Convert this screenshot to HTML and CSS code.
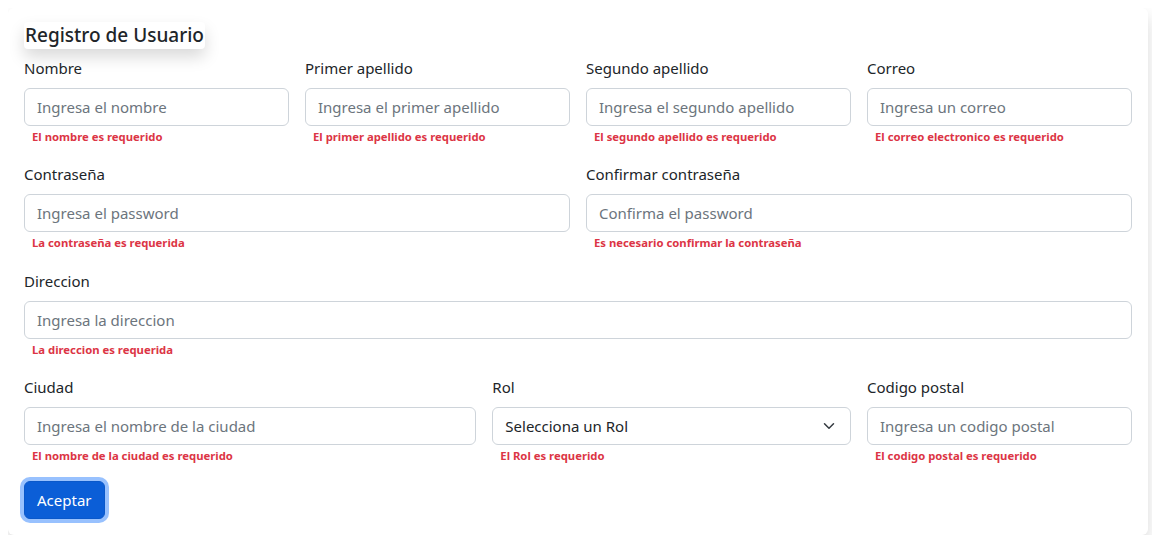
FILE: index.html
```html
<!DOCTYPE html>
<html lang="es">
  <head>
    <meta charset="UTF-8" />
    <meta name="viewport" content="width=device-width, initial-scale=1.0" />
    <title>Registro de Usuario</title>
    <link rel="stylesheet" href="styles.css">
  </head>
  <body>
    <form class="register-card">
      <h2 class="register-title">Registro de Usuario</h2>

      <div class="form-row">
        <div class="field col-3">
          <label>Nombre</label>
          <input type="text" placeholder="Ingresa el nombre" />
          <div class="error">El nombre es requerido</div>
        </div>
        <div class="field col-3">
          <label>Primer apellido</label>
          <input type="text" placeholder="Ingresa el primer apellido" />
          <div class="error">El primer apellido es requerido</div>
        </div>
        <div class="field col-3">
          <label>Segundo apellido</label>
          <input type="text" placeholder="Ingresa el segundo apellido" />
          <div class="error">El segundo apellido es requerido</div>
        </div>
        <div class="field col-3">
          <label>Correo</label>
          <input type="email" placeholder="Ingresa un correo" />
          <div class="error">El correo electronico es requerido</div>
        </div>
      </div>

      <div class="form-row">
        <div class="field col-6">
          <label>Contraseña</label>
          <input type="password" placeholder="Ingresa el password" />
          <div class="error">La contraseña es requerida</div>
        </div>
        <div class="field col-6">
          <label>Confirmar contraseña</label>
          <input type="password" placeholder="Confirma el password" />
          <div class="error">Es necesario confirmar la contraseña</div>
        </div>
      </div>

      <div class="form-row">
        <div class="field col-12">
          <label>Direccion</label>
          <input type="text" placeholder="Ingresa la direccion" />
          <div class="error">La direccion es requerida</div>
        </div>
      </div>

      <div class="form-row">
        <div class="field col-5">
          <label>Ciudad</label>
          <input type="text" placeholder="Ingresa el nombre de la ciudad" />
          <div class="error">El nombre de la ciudad es requerido</div>
        </div>
        <div class="field col-4">
          <label>Rol</label>
          <div class="select-wrap">
            <select>
              <option>Selecciona un Rol</option>
              <option>Administrador</option>
              <option>Usuario</option>
            </select>
            <svg class="select-arrow" viewBox="0 0 16 16" width="16" height="12">
              <path d="m2 5 6 6 6-6" fill="none" stroke="#343a40" stroke-width="2" stroke-linecap="round" stroke-linejoin="round" />
            </svg>
          </div>
          <div class="error">El Rol es requerido</div>
        </div>
        <div class="field col-3">
          <label>Codigo postal</label>
          <input type="text" placeholder="Ingresa un codigo postal" />
          <div class="error">El codigo postal es requerido</div>
        </div>
      </div>

      <button type="button" class="btn-submit">Aceptar</button>
    </form>
  </body>
</html>
```

FILE: styles.css
```css
* {
  box-sizing: border-box;
}

body {
  margin: 8px;
  background: #fff;
  font-family: "Noto Sans", "Liberation Sans", sans-serif;
  color: #212529;
  font-size: 15px;
  line-height: 1.5;
}

.register-card {
  width: 1140px;
  background: #fff;
  border-radius: 6px;
  box-shadow: 0 8px 16px rgba(0, 0, 0, 0.15);
  padding: 14px 16px 16px;
}

.register-title {
  display: inline-block;
  margin: 0 0 7px;
  padding: 0 1px;
  font-size: 19px;
  font-weight: 500;
  line-height: 27px;
  border-radius: 4px;
  box-shadow: 0 8px 16px rgba(0, 0, 0, 0.15);
}

.form-row {
  display: flex;
  gap: 16px;
  margin-bottom: 16.33px;
}

.col-3 { width: calc((100% + 16px) * 3 / 12 - 16px); }
.col-4 { width: calc((100% + 16px) * 4 / 12 - 16px); }
.col-5 { width: calc((100% + 16px) * 5 / 12 - 16px); }
.col-6 { width: calc((100% + 16px) * 6 / 12 - 16px); }
.col-12 { width: 100%; }

.field label {
  display: block;
  margin-bottom: 8px;
  line-height: 24px;
}

.field input,
.field select {
  display: block;
  width: 100%;
  height: 38px;
  padding: 6px 12px;
  font: inherit;
  color: #212529;
  background: #fff;
  border: 1px solid #ced4da;
  border-radius: 6px;
  outline: none;
}

.field input::placeholder {
  color: #6c757d;
}

.select-wrap {
  position: relative;
}

.field select {
  appearance: none;
  -webkit-appearance: none;
  padding-right: 36px;
}

.select-arrow {
  position: absolute;
  right: 14px;
  top: 13px;
  pointer-events: none;
}

.error {
  margin-top: 2px;
  padding-left: 8px;
  font-size: 11.3px;
  font-weight: 700;
  line-height: 18px;
  color: #dc3545;
}

.btn-submit {
  display: block;
  margin-top: 1px;
  height: 38px;
  padding: 6px 12px;
  font: inherit;
  color: #fff;
  background: #0b5ed7;
  border: 1px solid #0a58ca;
  border-radius: 6px;
  box-shadow: 0 0 0 4px rgba(49, 132, 253, 0.5);
  cursor: pointer;
}
```
